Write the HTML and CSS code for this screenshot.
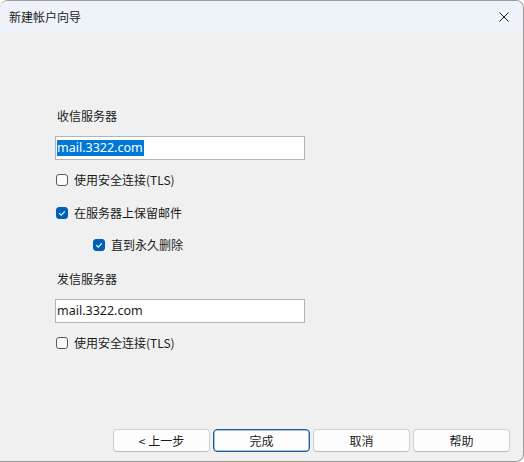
FILE: index.html
```html
<!DOCTYPE html>
<html lang="zh-CN">
<head>
<meta charset="utf-8">
<title>新建帐户向导</title>
<link rel="stylesheet" href="styles.css">
</head>
<body>
<div class="window">
  <div class="titlebar">
    <span class="title">新建帐户向导</span>
    <span class="close">
      <svg width="10" height="10" viewBox="0 0 10 10"><path d="M0.5 0.5 L9.5 9.5 M9.5 0.5 L0.5 9.5" stroke="#1a1a1a" stroke-width="1" fill="none"/></svg>
    </span>
  </div>
  <div class="content">
    <div class="label first">收信服务器</div>
    <div class="input"><span class="sel">mail.3322.com</span></div>
    <label class="check r1"><span class="box"></span><span class="txt">使用安全连接(TLS)</span></label>
    <label class="check r2"><span class="box on"><svg width="12" height="12" viewBox="0 0 12 12"><path d="M3.2 6.2 L5.2 8.1 L8.8 4.3" stroke="#fff" stroke-width="1.1" fill="none"/></svg></span><span class="txt">在服务器上保留邮件</span></label>
    <label class="check r3 indent"><span class="box on"><svg width="12" height="12" viewBox="0 0 12 12"><path d="M3.2 6.2 L5.2 8.1 L8.8 4.3" stroke="#fff" stroke-width="1.1" fill="none"/></svg></span><span class="txt">直到永久删除</span></label>
    <div class="label second">发信服务器</div>
    <div class="input"><span class="val">mail.3322.com</span></div>
    <label class="check r4"><span class="box"></span><span class="txt">使用安全连接(TLS)</span></label>
  </div>
  <div class="buttons">
    <button class="btn">&lt; 上一步</button>
    <button class="btn default">完成</button>
    <button class="btn">取消</button>
    <button class="btn">帮助</button>
  </div>
</div>
</body>
</html>
```
FILE: styles.css
```css
html, body {
  margin: 0;
  padding: 0;
  background: #ffffff;
}
body {
  font-family: "Noto Sans", "Noto Sans CJK SC", sans-serif;
  font-size: 12px;
  color: #1a1a1a;
}
.window {
  width: 524px;
  height: 462px;
  box-sizing: border-box;
  border-top: 1px solid #9a9a9a;
  border-right: 1px solid #9a9a9a;
  border-bottom: 1px solid #9a9a9a;
  border-radius: 8px 8px 8px 0;
  background: #f0f0f0;
  overflow: hidden;
  display: flex;
  flex-direction: column;
}
.titlebar {
  height: 31px;
  background: #eef3f9;
  display: flex;
  align-items: center;
  justify-content: space-between;
  padding: 0 9px 0 9px;
  flex: none;
}
.title {
  font-family: "Noto Sans CJK SC", sans-serif;
  font-size: 12px;
  line-height: 16px;
  color: #1a1a1a;
}
.close {
  display: flex;
  width: 10px;
  height: 10px;
  margin-right: 5px;
}
.content {
  flex: 1;
  padding-left: 55px;
  display: flex;
  flex-direction: column;
  align-items: flex-start;
}
.label {
  font-family: "Noto Sans CJK SC", sans-serif;
  font-size: 12px;
  line-height: 16px;
  padding-left: 2px;
}
.label.first { margin-top: 76px; }
.label.second { margin-top: 18px; }
.input {
  width: 250px;
  height: 24px;
  box-sizing: border-box;
  border: 1px solid #b4b4b4;
  background: #ffffff;
  margin-top: 12px;
  display: flex;
  align-items: center;
  padding-left: 1px;
  font-family: "Noto Sans", sans-serif;
  font-size: 12.5px;
}
.sel {
  background: #0078d7;
  color: #ffffff;
  line-height: 16px;
  padding-right: 1px;
}
.val {
  color: #1a1a1a;
  line-height: 16px;
}
.check {
  display: flex;
  align-items: center;
  height: 16px;
  margin-left: 1px;
}
.check.r1 { margin-top: 12px; }
.check.r2 { margin-top: 17px; }
.check.r3 { margin-top: 16px; }
.check.r4 { margin-top: 12px; }
.check.indent { margin-left: 38px; }
.box {
  width: 12px;
  height: 12px;
  box-sizing: border-box;
  border: 1px solid #5a5a5a;
  border-radius: 3px;
  background: #fafafa;
  display: flex;
}
.box.on {
  background: #005fb8;
  border-color: #005fb8;
}
.box.on svg { margin: -1px; }
.txt {
  margin-left: 6px;
  font-family: "Noto Sans CJK SC", sans-serif;
  font-size: 12px;
  line-height: 16px;
}
.buttons {
  flex: none;
  display: flex;
  gap: 3px;
  padding: 0 13px 9px 0;
  justify-content: flex-end;
}
.btn {
  width: 97px;
  height: 23px;
  box-sizing: border-box;
  border: 1px solid #d0d0d0;
  border-bottom-color: #bcbcbc;
  border-radius: 4px;
  background: #fdfdfd;
  font-family: "Noto Sans CJK SC", sans-serif;
  font-size: 12px;
  color: #1a1a1a;
  padding: 0;
  line-height: 16px;
}
.btn.default {
  border: 1px solid #1a5e99;
  box-shadow: inset 0 0 0 0.5px #4a84bd;
}
```
